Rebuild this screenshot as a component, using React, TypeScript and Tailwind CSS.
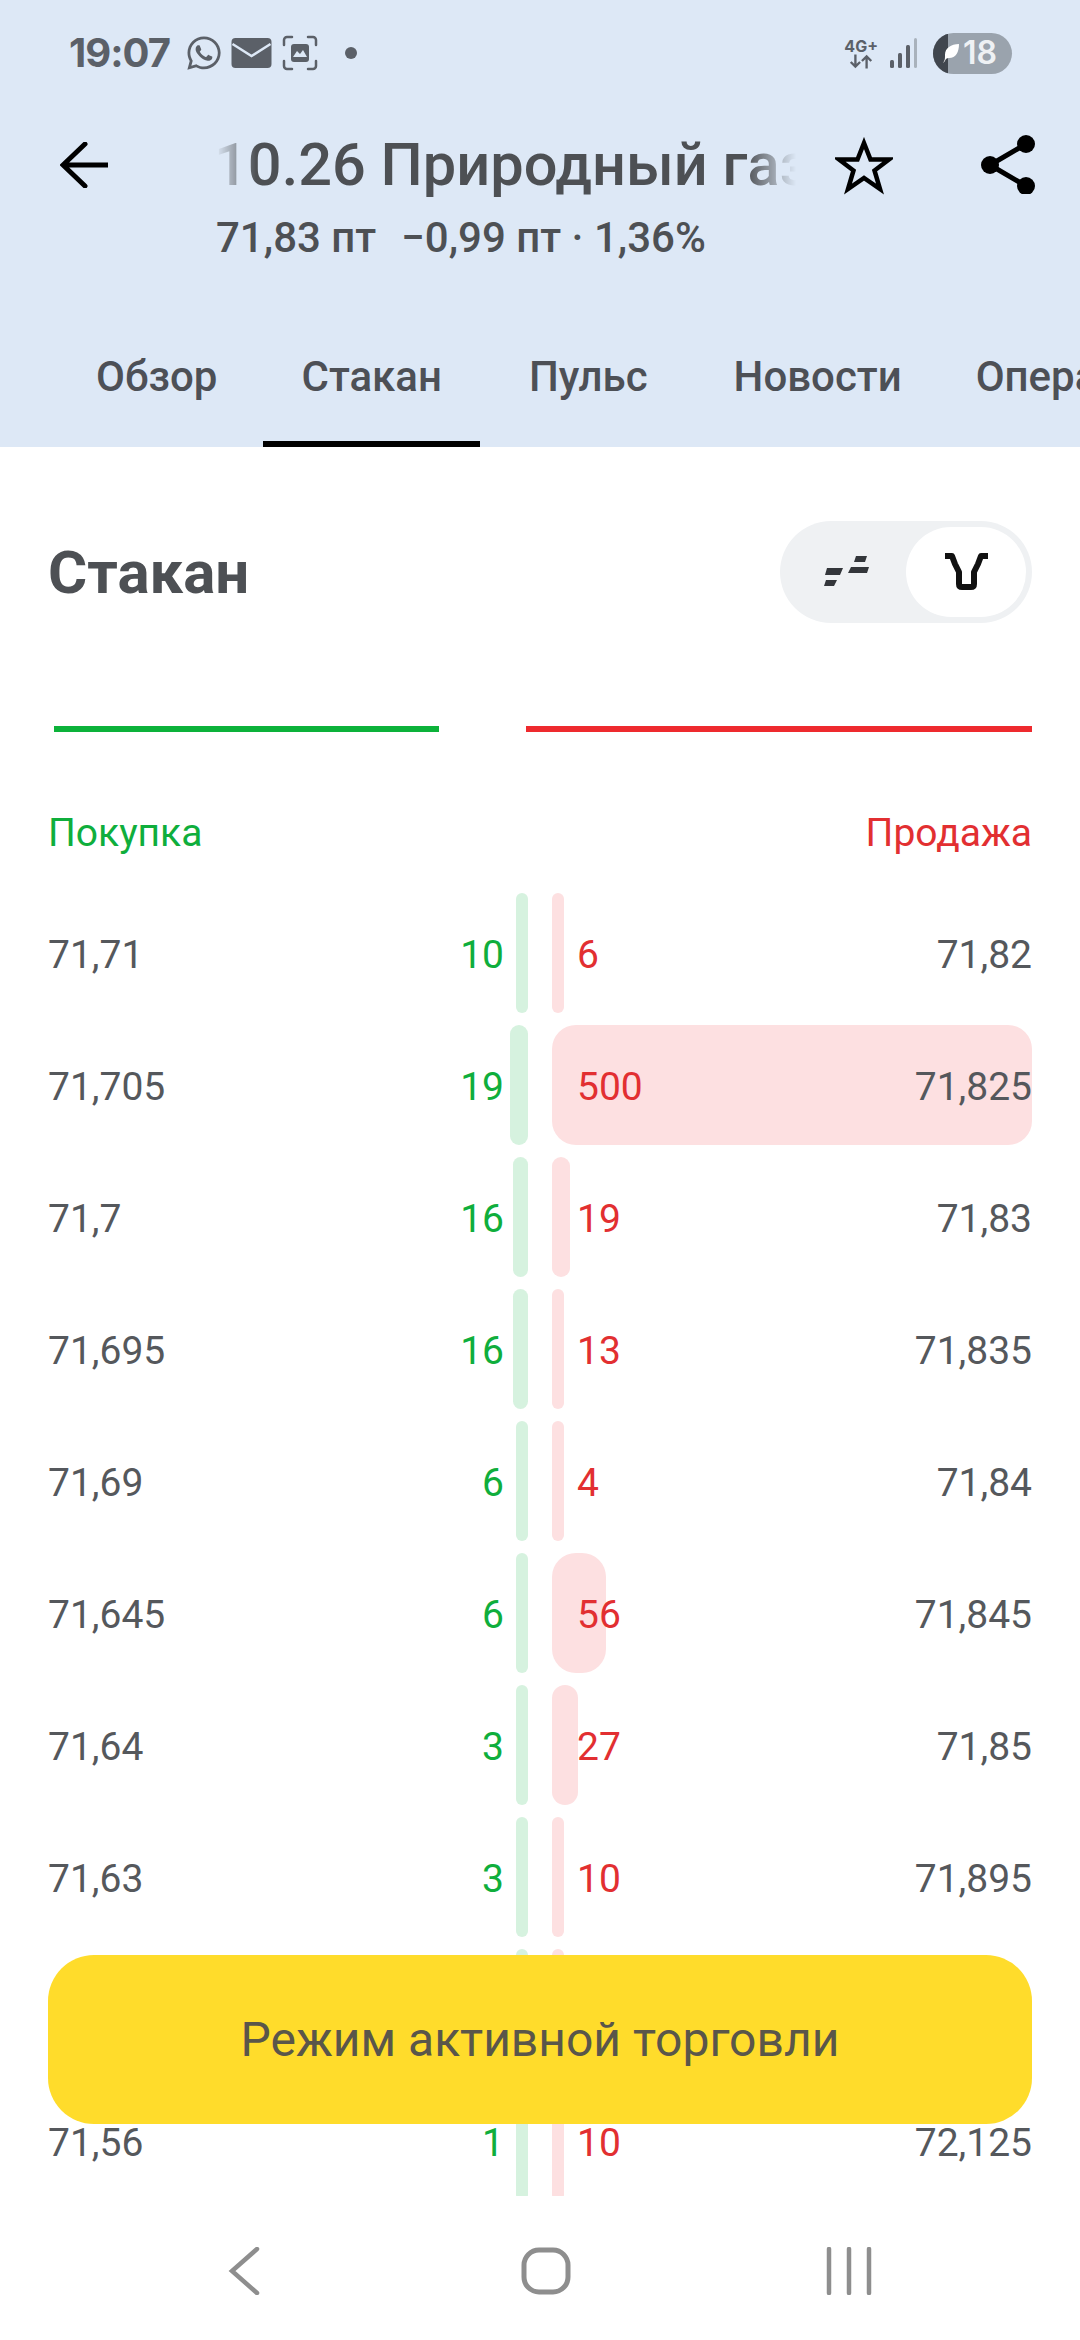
import React from "react";
import { FaWhatsapp } from "react-icons/fa";

const rows: [string, string, number, string, number, string][] = [
  ["71,71", "10", 10, "6", 6, "71,82"],
  ["71,705", "19", 19, "500", 500, "71,825"],
  ["71,7", "16", 16, "19", 19, "71,83"],
  ["71,695", "16", 16, "13", 13, "71,835"],
  ["71,69", "6", 6, "4", 4, "71,84"],
  ["71,645", "6", 6, "56", 56, "71,845"],
  ["71,64", "3", 3, "27", 27, "71,85"],
  ["71,63", "3", 3, "10", 10, "71,895"],
  ["", "", 3, "", 10, ""],
  ["71,56", "1", 1, "10", 10, "72,125"],
];

function Row({ r }: { r: (typeof rows)[number] }) {
  const gw = Math.max(12, r[2] * 0.96);
  const rw = Math.max(12, r[4] * 0.96);
  return (
    <div className="flex h-[120px] shrink-0 justify-between px-[48px] text-[39px] leading-[125px]">
      <div className="relative flex w-[480px] justify-between pr-[24px]">
        <span className="text-[#55585c]">{r[0]}</span>
        <span className="text-[#0fae3c]">{r[1]}</span>
        <div className="absolute right-0 top-0 h-full rounded-[12px] bg-[#d6f2df]" style={{ width: gw }} />
      </div>
      <div className="relative flex w-[480px] justify-between pl-[25px]">
        <div className="absolute left-0 top-0 h-full rounded-[24px] bg-[#fde0e1]" style={{ width: rw }} />
        <span className="relative text-[#e22f31]">{r[3]}</span>
        <span className="relative text-[#55585c]">{r[5]}</span>
      </div>
    </div>
  );
}

const tabText = "h-[94px] shrink-0 border-b-[6px] px-[38px] text-[42px] font-medium leading-[48px] text-[#4d5056]";

export default function App() {
  return (
    <div className="relative flex h-[2340px] w-[1080px] flex-col overflow-hidden bg-white font-['Roboto',sans-serif]">
      <header className="flex h-[447px] shrink-0 flex-col bg-[#dde8f6]">
        <div className="flex h-[106px] items-center justify-between pl-[69px] pr-[68px] text-[#5b6068]">
          <div className="flex items-center">
            <span className="font-['Inter',sans-serif] text-[40px] font-bold tracking-[-1px]">19:07</span>
            <FaWhatsapp className="ml-[15px] h-[38px] w-[38px]" />
            <svg viewBox="0 0 40 30" className="ml-[8px] h-[30px] w-[41px]">
              <rect x="0" y="0" width="40" height="30" rx="4" fill="#5b6068" />
              <path d="M1 6 L20 18 L39 6" fill="none" stroke="#dde8f6" strokeWidth="2.5" />
            </svg>
            <svg viewBox="0 0 36 36" className="ml-[10px] h-[36px] w-[36px]" fill="none" stroke="#5b6068" strokeWidth="2.5" strokeLinecap="round">
              <path d="M2 10V5a3 3 0 0 1 3-3h5M26 2h5a3 3 0 0 1 3 3v5M34 26v5a3 3 0 0 1-3 3h-5M10 34H5a3 3 0 0 1-3-3v-5" />
              <rect x="9" y="9" width="18" height="18" rx="3" fill="#5b6068" stroke="none" />
              <path d="M11 22l4-6 3 3 3-4 4 7z" fill="#dde8f6" stroke="none" />
            </svg>
            <span className="ml-[27px] h-[12px] w-[12px] rounded-full bg-[#5b6068]" />
          </div>
          <div className="flex items-center">
            <div className="flex flex-col items-center font-['Inter',sans-serif] text-[16px] font-bold leading-[16px]">
              <span>4G+</span>
              <svg viewBox="0 0 30 15" className="h-[15px] w-[28px]" fill="none" stroke="#5b6068" strokeWidth="2.5">
                <path d="M9 0v13M4 8l5 5 5-5M21 15V2M16 7l5-5 5 5" />
              </svg>
            </div>
            <svg viewBox="0 0 28 30" className="ml-[12px] h-[30px] w-[28px]">
              <rect x="0" y="22" width="4" height="8" rx="1.5" fill="#5b6068" />
              <rect x="8" y="15" width="4" height="15" rx="1.5" fill="#5b6068" />
              <rect x="16" y="7" width="4" height="23" rx="1.5" fill="#5b6068" />
              <rect x="24" y="0" width="3" height="30" rx="1.5" fill="#a9b2bc" />
            </svg>
            <div className="ml-[15px] flex h-[41px] w-[79px] items-center overflow-hidden rounded-full bg-[#9aa3ad]">
              <div className="flex h-full w-[15px] shrink-0 bg-[#40464e]" />
              <svg viewBox="0 0 20 24" className="ml-[-8px] h-[26px] w-[20px]">
                <path d="M3 22C5 19 5 18 5 14 5 7 11 3 19 3c0 8-3 14-10 14-1 0-2 0-3 1-1 1-1 3-3 4z" fill="#fff" />
              </svg>
              <span className="ml-[3px] font-['Inter',sans-serif] text-[32px] font-semibold leading-none text-[#eef1f4]">18</span>
            </div>
          </div>
        </div>
        <div className="flex h-[109px] items-start justify-between pl-[60px] pr-[45px] pt-[27px]">
          <svg viewBox="0 0 48 46" className="mt-[9px] h-[46px] w-[48px]" fill="none" stroke="#000" strokeWidth="5" strokeLinecap="round">
            <path d="M48 23H4M25 2L3 23l22 21" />
          </svg>
          <div className="ml-[108px] w-[580px] overflow-hidden whitespace-nowrap [mask-image:linear-gradient(90deg,transparent,#000_40px,#000_530px,transparent)]">
            <span className="ml-[-2px] text-[59.5px] font-medium leading-[64px] text-[#4d5054]">10.26 Природный газ</span>
          </div>
          <svg viewBox="0 0 58 58" className="ml-[39px] mt-[4px] h-[58px] w-[58px]" fill="none" stroke="#000" strokeWidth="4.5">
            <path d="M29 6l6.500 16.500H54L39.500 33.500 45 52 29 41 13 52l5.500-18.500L4 22.500h18.500z" />
          </svg>
          <svg viewBox="0 0 54 60" className="ml-[88px] mt-[1px] h-[60px] w-[54px]" fill="#000">
            <path d="M45 10L9 31l36 21" fill="none" stroke="#000" strokeWidth="5" />
            <circle cx="45" cy="10" r="9" />
            <circle cx="9" cy="31" r="9" />
            <circle cx="45" cy="52" r="9" />
          </svg>
        </div>
        <div className="flex pl-[216px] text-[42px] font-medium leading-[46px] text-[#4d5054]">
          <span>71,83 пт</span>
          <span className="ml-[25px]">−0,99 пт · 1,36%</span>
        </div>
        <div className="mt-auto flex pl-[58px]">
          <div className={`mr-[8px] border-transparent ${tabText}`}>Обзор</div>
          <div className={`mr-[11px] border-black ${tabText}`}>Стакан</div>
          <div className={`mr-[10px] border-transparent ${tabText}`}>Пульс</div>
          <div className={`mr-[-2px] border-transparent ${tabText}`}>Новости</div>
          <div className={`border-transparent ${tabText}`}>Операции</div>
        </div>
      </header>

      <section className="flex h-[250px] shrink-0 items-center justify-between px-[48px]">
        <h1 className="pt-[2px] text-[60px] font-bold text-[#4d5054]">Стакан</h1>
        <div className="flex h-[102px] w-[252px] items-center justify-between rounded-full bg-[#eff1f3] pr-[6px]">
          <svg viewBox="0 0 46 32" className="ml-[44px] h-[32px] w-[46px]" fill="#33363a">
            <path d="M3 12h16l-3 7H1zM2 24h11l-3 6H0zM32 0h11l-2 6H30zM27 11h18l-2 6H24z" />
          </svg>
          <div className="flex h-[90px] w-[120px] items-center justify-center rounded-full bg-white">
            <svg viewBox="0 0 43 38" className="h-[38px] w-[43px]" fill="none" stroke="#111" strokeWidth="6" strokeLinejoin="round">
              <path d="M0 3h7l3 8 4 8v12q0 3 3 3h9q3 0 3-3V19l4-8 3-8h7" />
            </svg>
          </div>
        </div>
      </section>

      <div className="ml-[54px] mt-[29px] flex w-[978px] justify-between">
        <div className="h-[6px] w-[385px] bg-[#0cb23a]" />
        <div className="h-[6px] w-[506px] bg-[#ee2a2e]" />
      </div>

      <div className="mt-[78px] flex justify-between px-[48px] text-[39px] leading-[46px]">
        <span className="text-[#0fae3c]">Покупка</span>
        <span className="text-[#e22f31]">Продажа</span>
      </div>

      <div className="mt-[37px] flex flex-col gap-[12px]">
        {rows.map((r, i) => (
          <Row key={i} r={r} />
        ))}
      </div>

      <button className="absolute left-[48px] top-[1955px] h-[169px] w-[984px] rounded-[46px] bg-[#ffdc2b] text-[48px] text-[#5a564a]">
        Режим активной торговли
      </button>

      <nav className="absolute bottom-0 left-0 flex h-[144px] w-full items-start bg-white pt-[51px]">
        <svg viewBox="0 0 32 48" className="ml-[228px] h-[48px] w-[32px]" fill="none" stroke="#8e8e8e" strokeWidth="4.5" strokeLinecap="round">
          <path d="M29 2L4 24l25 22" />
        </svg>
        <svg viewBox="0 0 50 48" className="ml-[261px] h-[48px] w-[50px]" fill="none" stroke="#8e8e8e" strokeWidth="5">
          <rect x="3" y="3" width="44" height="42" rx="15" />
        </svg>
        <svg viewBox="0 0 46 48" className="ml-[255px] h-[48px] w-[46px]" fill="none" stroke="#8e8e8e" strokeWidth="4.5" strokeLinecap="round">
          <path d="M3 2v44M23 2v44M43 2v44" />
        </svg>
      </nav>
    </div>
  );
}
